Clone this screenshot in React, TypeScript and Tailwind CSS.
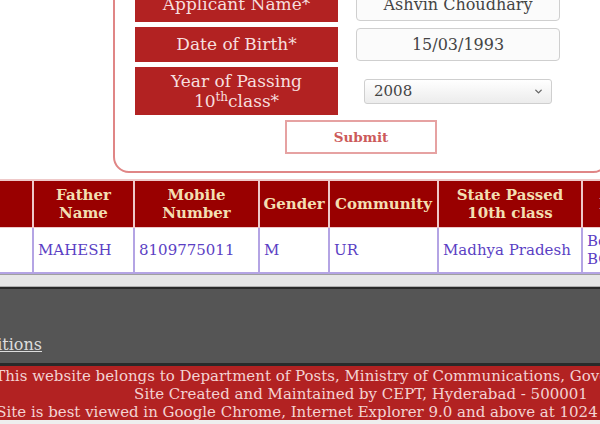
import { ChevronDown } from "lucide-react";

// result row columns
const cols = [
  { head: "", value: [""] },
  { head: "Father Name", value: ["MAHESH"] },
  { head: "Mobile Number", value: ["8109775011"] },
  { head: "Gender", value: ["M"] },
  { head: "Community", value: ["UR"] },
  { head: "State Passed 10th class", value: ["Madhya Pradesh"] },
  { head: "Division", value: ["Betul", "BO"] },
];

const grid =
  "grid grid-cols-[32px_99px_123px_68px_107px_142px_100px] gap-x-[2px] w-[700px]";

export default function App() {
  return (
    <div className="w-[600px] h-[424px] overflow-hidden bg-white [font-family:'DejaVu_Serif']">
      {/* search form */}
      <div className="ml-[113px] w-[496px] -mt-[15px] border-2 border-[#e08686] rounded-[16px] pb-[17px]">
        <div className="grid grid-cols-[203px_204px] gap-x-[18px] gap-y-[5px] pl-[20px] items-center">
          <div className="h-[35px] bg-[#b22222] text-[#f6dede] text-[17px] flex items-center justify-center">
            Applicant Name*
          </div>
          <div className="h-[33px] border border-[#cfcfcf] rounded-[4px] bg-[#fbfbfb] text-[#444] text-[16px] flex items-center justify-center">
            Ashvin Choudhary
          </div>

          <div className="h-[35px] bg-[#b22222] text-[#f6dede] text-[17px] flex items-center justify-center">
            Date of Birth*
          </div>
          <div className="h-[33px] border border-[#cfcfcf] rounded-[4px] bg-[#fbfbfb] text-[#444] text-[16px] flex items-center justify-center">
            15/03/1993
          </div>

          <div className="h-[48px] bg-[#b22222] text-[#f6dede] text-[17px] leading-[20px] flex flex-col items-center justify-center">
            <span>Year of Passing</span>
            <span>
              10<sup className="text-[12px]">th</sup>class*
            </span>
          </div>
          <div className="flex justify-center">
            <div className="w-[188px] h-[25px] border border-[#cfcfcf] rounded-[3px] bg-gradient-to-b from-white to-[#ececec] text-[#444] text-[15px] flex items-center justify-between pl-[9px] pr-[7px]">
              <span>2008</span>
              <ChevronDown size={11} strokeWidth={3} className="text-[#666]" />
            </div>
          </div>
        </div>
        <div className="flex justify-center mt-[5px]">
          <button className="w-[152px] h-[34px] border-2 border-[#e6a2a2] bg-white text-[#cc5a5a] text-[13.5px] font-bold">
            Submit
          </button>
        </div>
      </div>

      {/* result table */}
      <div className="mt-[6px] border-t-2 border-[#efc9c9]">
        <div className={`${grid} bg-[#efc9c9]`}>
          {cols.map((c, i) => (
            <div
              key={i}
              className="h-[46px] bg-[#990000] text-[#f3dfb2] text-[15px] font-bold leading-[18px] flex items-center justify-center text-center px-[2px]"
            >
              {c.head}
            </div>
          ))}
        </div>
        <div className={`${grid} bg-[#b4a4e4] border-t border-[#efc9c9]`}>
          {cols.map((c, i) => (
            <div
              key={i}
              className="h-[44px] bg-white text-[#5b3fc4] text-[15px] leading-[18px] flex flex-col justify-center px-[4px]"
            >
              {c.value.map((v, j) => (
                <span key={j}>{v}</span>
              ))}
            </div>
          ))}
        </div>
        <div className="h-[2px] bg-[#b4a4e4]"></div>
      </div>

      {/* footer */}
      <div className="h-[1px] bg-[#a0a0a0]"></div>
      <div className="h-[11px] bg-[#e6e6e6]"></div>
      <div className="h-[1px] bg-[#b0b0b0]"></div>
      <div className="h-[2px] bg-[#2a2a2a]"></div>
      <div className="h-[74px] bg-[#555555] flex flex-col justify-end pb-[8px]">
        <div className="w-[42px] overflow-hidden flex justify-end">
          <a className="whitespace-nowrap underline text-[#dddddd] text-[16px] leading-[20px]">
            Terms &amp; Conditions
          </a>
        </div>
      </div>
      <div className="h-[3px] bg-[#2a2a2a]"></div>
      <div className="h-[54px] bg-[#b22222] overflow-hidden">
        <div className="w-[726px] -ml-[2px] text-center text-[#f3d3d3] text-[15px] leading-[18px] whitespace-nowrap pt-[1px]">
          <div className="flex justify-center">
            This website belongs to Department of Posts, Ministry of Communications, Government of India
          </div>
          <div>Site Created and Maintained by CEPT, Hyderabad - 500001</div>
          <div className="flex justify-center">
            Site is best viewed in Google Chrome, Internet Explorer 9.0 and above at 1024 x 768 resolution
          </div>
        </div>
      </div>
      <div className="h-[6px] bg-[#eeeeee]"></div>
    </div>
  );
}
